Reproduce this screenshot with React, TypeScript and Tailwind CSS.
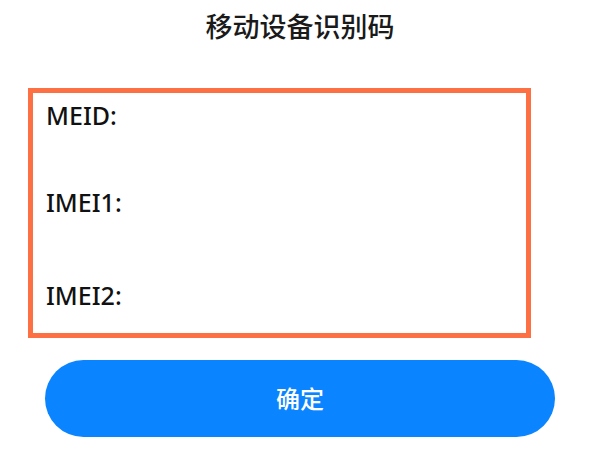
import React from "react";

const FONT = "font-['Noto_Sans','Noto_Sans_CJK_SC',sans-serif]";

const fields = [
  { key: "meid", label: "MEID:", gap: "mt-0" },
  { key: "imei1", label: "IMEI1:", gap: "mt-[57px]" },
  { key: "imei2", label: "IMEI2:", gap: "mt-[63px]" },
];

const App = () => {
  return (
    <div className={`w-[600px] h-[450px] bg-white flex flex-col ${FONT}`}>
      <h1 className="pt-[10px] text-center text-[27px] leading-[33px] font-medium text-[#1a1a1a]">
        移动设备识别码
      </h1>

      <div className="mt-[45px] ml-[28px] w-[503px] h-[250px] border-[5px] border-[#fd7043] pt-[7px] pl-[13px] flex flex-col">
        {fields.map((f) => (
          <div
            key={f.key}
            className={`${f.gap} text-[25px] leading-[30px] font-medium text-[#111]`}
          >
            {f.label}
          </div>
        ))}
      </div>

      <button className="mt-[22px] mx-auto w-[510px] h-[77px] rounded-full bg-[#0a84ff] text-white text-[24px] font-medium flex items-center justify-center">
        确定
      </button>
    </div>
  );
};

export default App;
